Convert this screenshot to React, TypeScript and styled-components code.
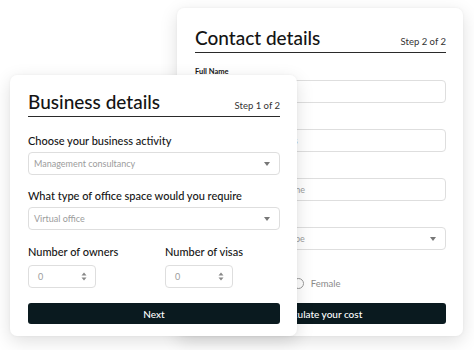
import React from "react";
import styled, { createGlobalStyle } from "styled-components";

const Global = createGlobalStyle`
  html, body { margin: 0; padding: 0; background: #ffffff; }
  body { font-family: Lato, "Open Sans", "Liberation Sans", sans-serif; color: #1c1c1c; }
  * { box-sizing: border-box; }
`;

const Stage = styled.div`
  position: relative;
  width: 474px;
  height: 350px;
  overflow: hidden;
  background: #ffffff;
`;

const Card = styled.div<{ $left: number; $top: number; $width: number; $height: number; $z: number }>`
  position: absolute;
  left: ${(p) => p.$left}px;
  top: ${(p) => p.$top}px;
  width: ${(p) => p.$width}px;
  height: ${(p) => p.$height}px;
  z-index: ${(p) => p.$z};
  background: #ffffff;
  border-radius: 7px;
  box-shadow: 0 5px 18px rgba(0, 0, 0, 0.13), 0 0 3px rgba(0, 0, 0, 0.05);
  padding: ${(p) => (p.$z > 1 ? 16 : 19)}px 17px 12px 18px;
  display: flex;
  flex-direction: column;
`;

const Header = styled.div`
  display: flex;
  justify-content: space-between;
  align-items: baseline;
  padding-bottom: 3px;
  border-bottom: 1.5px solid #2a2a2a;
`;

const Title = styled.h1`
  margin: 0;
  font-family: Lato, "Noto Sans", sans-serif;
  font-weight: 500;
  font-size: 19px;
  line-height: 22px;
  color: #141414;
`;

const Step = styled.span`
  font-size: 9.5px;
  color: #333;
`;

const Group = styled.div<{ $gap: number; $mt: number }>`
  display: flex;
  flex-direction: column;
  gap: ${(p) => p.$gap}px;
  margin-top: ${(p) => p.$mt}px;
`;

const Label = styled.label<{ $small?: boolean }>`
  font-size: ${(p) => (p.$small ? 7.5 : 11)}px;
  line-height: ${(p) => (p.$small ? 11 : 14)}px;
  font-weight: ${(p) => (p.$small ? 700 : 500)};
  color: #151515;
`;

const Box = styled.div<{ $width?: number }>`
  height: 23px;
  width: ${(p) => (p.$width ? `${p.$width}px` : "100%")};
  border: 1px solid #dedede;
  border-radius: 4px;
  display: flex;
  align-items: center;
  justify-content: space-between;
  padding: 0 9px 0 5px;
  font-size: 9px;
  color: #9c9c9c;
  white-space: nowrap;
  overflow: hidden;
`;

const NumBox = styled(Box)`
  padding: 0 8px 0 9px;
`;

const Caret = styled.span`
  width: 0;
  height: 0;
  border-left: 3.5px solid transparent;
  border-right: 3.5px solid transparent;
  border-top: 4px solid #777;
  flex: none;
`;

const Spinner = () => (
  <svg width="6" height="9" viewBox="0 0 6 9" style={{ flex: "none" }}>
    <path d="M3 0.5 L5.5 3.5 H0.5 Z" fill="#888" />
    <path d="M3 8.5 L5.5 5.5 H0.5 Z" fill="#888" />
  </svg>
);

const Columns = styled.div`
  display: grid;
  grid-template-columns: 137px 1fr;
  margin-top: 15px;
`;

const RadioRow = styled.div`
  display: flex;
  align-items: center;
  gap: 59px;
  height: 14px;
  font-size: 9.5px;
  color: #8a8a8a;
`;

const RadioOpt = styled.span`
  display: flex;
  align-items: center;
  gap: 7px;
`;

const Circle = styled.span`
  width: 11px;
  height: 11px;
  border: 1px solid #9a9a9a;
  border-radius: 50%;
  display: inline-block;
`;

const Button = styled.button<{ $mt: number }>`
  margin-top: ${(p) => p.$mt}px;
  height: 22px;
  width: 100%;
  border: none;
  border-radius: 3px;
  background: #0a1a1f;
  color: #ffffff;
  font-family: Lato, "Open Sans", sans-serif;
  font-size: 10px;
  font-weight: 500;
  padding: 0;
`;

export default function App() {
  return (
    <>
      <Global />
      <Stage>
        <Card $left={177} $top={8} $width={286} $height={328} $z={1}>
          <Header>
            <Title>Contact details</Title>
            <Step>Step 2 of 2</Step>
          </Header>
          <Group $gap={3} $mt={13}>
            <Label $small>Full Name</Label>
            <Box>Enter your full name</Box>
          </Group>
          <Group $gap={3} $mt={12}>
            <Label $small>Email</Label>
            <Box>Enter your email address</Box>
          </Group>
          <Group $gap={3} $mt={12}>
            <Label $small>Phone number</Label>
            <Box>Enter your business phone</Box>
          </Group>
          <Group $gap={3} $mt={12}>
            <Label $small>Nationality</Label>
            <Box>
              Select your residence type
              <Caret />
            </Box>
          </Group>
          <Group $gap={3} $mt={12}>
            <Label $small>Gender</Label>
            <RadioRow>
              <RadioOpt>
                <Circle />
                Male
              </RadioOpt>
              <RadioOpt>
                <Circle />
                Female
              </RadioOpt>
            </RadioRow>
          </Group>
          <Button $mt={13}>Calculate your cost</Button>
        </Card>

        <Card $left={10} $top={75} $width={287} $height={261} $z={2}>
          <Header>
            <Title>Business details</Title>
            <Step>Step 1 of 2</Step>
          </Header>
          <Group $gap={4} $mt={17}>
            <Label>Choose your business activity</Label>
            <Box>
              Management consultancy
              <Caret />
            </Box>
          </Group>
          <Group $gap={4} $mt={14}>
            <Label>What type of office space would you require</Label>
            <Box>
              Virtual office
              <Caret />
            </Box>
          </Group>
          <Columns>
            <Group $gap={6} $mt={0}>
              <Label>Number of owners</Label>
              <NumBox $width={68}>
                0
                <Spinner />
              </NumBox>
            </Group>
            <Group $gap={6} $mt={0}>
              <Label>Number of visas</Label>
              <NumBox $width={68}>
                0
                <Spinner />
              </NumBox>
            </Group>
          </Columns>
          <Button $mt={15}>Next</Button>
        </Card>
      </Stage>
    </>
  );
}
